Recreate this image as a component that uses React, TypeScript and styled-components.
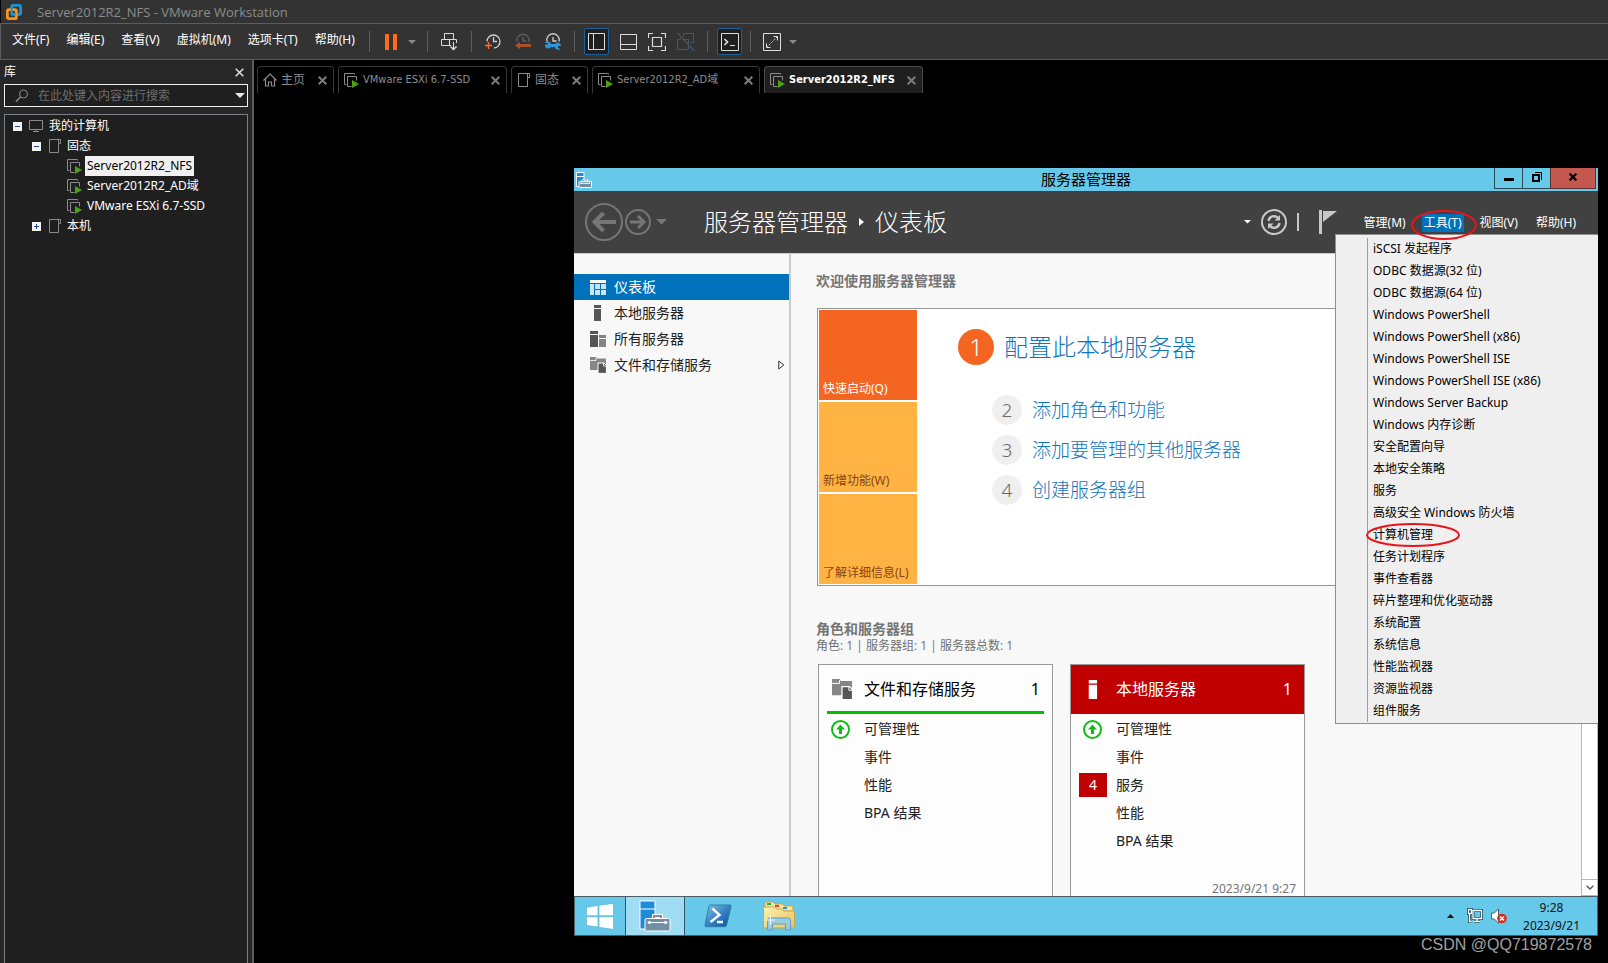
import React from 'react';
import styled, { createGlobalStyle, css } from 'styled-components';

const UI_FONT = '"Noto Sans", "Noto Sans CJK SC", sans-serif';
const TITLE_FONT = '"Open Sans", "Noto Sans CJK SC", sans-serif';
const TAB_FONT = '"DejaVu Sans Condensed", "Noto Sans CJK SC", sans-serif';

const GlobalStyle = createGlobalStyle`
  * { box-sizing: border-box; }
  body { margin: 0; background: #000; font-family: ${UI_FONT}; font-size: 12px; line-height: 20px; }
  button, input { font: inherit; color: inherit; margin: 0; padding: 0; border: 0; background: none; }
  a { color: inherit; text-decoration: none; }
  ul, h1, h2, h3, p { margin: 0; padding: 0; font-size: inherit; font-weight: inherit; list-style: none; }
  svg { display: block; flex: none; }
`;

/* ---------- host application ---------- */

const Page = styled.div`
  display: flex;
  flex-direction: column;
  height: 100vh;
  overflow: hidden;
  color: #fff;
`;

const TitleBar = styled.header`
  display: flex;
  align-items: center;
  gap: 15px;
  height: 23px;
  padding-left: 5px;
  background: #333;
  border-left: 1px solid #000;
  color: #8c8c8c;
  font-family: ${TITLE_FONT};
  font-size: 13px;
`;

const Toolbar = styled.nav`
  display: flex;
  align-items: center;
  height: 37px;
  padding-left: 11px;
  background: #333;
  border: solid #5c5c5c;
  border-width: 1px 0 1px 1px;
`;

const MenuBar = styled.div`
  display: flex;
  gap: 17px;
  width: 357px;
  padding-bottom: 3px;
  white-space: nowrap;
`;

const Divider = styled.span`
  width: 1px;
  height: 21px;
  background: #5c5c5c;
`;

const ToolGroup = styled.div<{ $gap: number; $pad: number; $end: number }>`
  display: flex;
  align-items: center;
  gap: ${p => p.$gap}px;
  padding: 0 ${p => p.$end}px 0 ${p => p.$pad}px;
`;

const ToolButton = styled.button<{ $active?: boolean }>`
  display: flex;
  align-items: center;
  justify-content: center;
  height: 27px;
  color: #dcdcdc;
  ${p => p.$active && css`
    width: 25px;
    background: #1f1f1f;
    border: 1px solid #1d6198;
    border-radius: 2px;
  `}
`;

const Body = styled.div`
  display: flex;
  flex: 1;
  min-height: 0;
`;

const Sidebar = styled.aside`
  display: flex;
  flex-direction: column;
  width: 254px;
  padding: 0 4px;
  background: #272727;
  border-right: 2px solid #5c5c5c;
`;

const SidebarHead = styled.div`
  display: flex;
  align-items: center;
  justify-content: space-between;
  height: 24px;
  padding-right: 4px;
`;

const SearchBox = styled.div`
  display: flex;
  align-items: center;
  gap: 9px;
  height: 23px;
  margin-bottom: 7px;
  padding: 0 2px 0 10px;
  background: #1f1f1f;
  border: 1px solid #f0f0f0;
`;

const SearchInput = styled.input`
  flex: 1;
  min-width: 0;
  outline: 0;
  &::placeholder { color: #6e6e6e; opacity: 1; }
`;

const Tree = styled.ul`
  flex: 1;
  padding-top: 1px;
  background: #1f1f1f;
  border: solid #7b7e84;
  border-width: 1px 1px 0;
`;

const TreeRow = styled.li<{ $indent: number }>`
  display: flex;
  align-items: center;
  gap: 7px;
  height: 20px;
  padding-left: ${p => p.$indent}px;
`;

const TreeLabel = styled.span<{ $selected?: boolean }>`
  margin-left: -4px;
  padding: 0 2px;
  ${p => p.$selected && css`background: #f0f0f0; color: #000;`}
`;

const Workspace = styled.main`
  display: flex;
  flex-direction: column;
  flex: 1;
  min-width: 0;
`;

const TabStrip = styled.div`
  display: flex;
  gap: 4px;
  height: 33px;
  padding: 6px 0 0 3px;
`;

const Tab = styled.div<{ $active?: boolean; $vm?: boolean; $width: number }>`
  display: flex;
  align-items: center;
  gap: 4px;
  width: ${p => p.$width}px;
  padding: 0 6px 0 5px;
  border: solid #363636;
  border-width: 1px 1px 0;
  border-radius: 4px 4px 0 0;
  font-family: ${TAB_FONT};
  font-size: ${p => (p.$vm ? 11 : 12)}px;
  white-space: nowrap;
  color: #8c8c8c;
  ${p => p.$active && css`
    background: #1f1f1f;
    border-color: #4a4a4a;
    color: #fff;
    font-weight: 700;
  `}
`;

const TabLink = styled.a`
  flex: 1;
`;

const GuestArea = styled.div`
  display: flex;
  flex: 1;
  min-height: 0;
  padding: 75px 10px 0 320px;
`;

const Watermark = styled.footer`
  height: 27px;
  padding-right: 16px;
  text-align: right;
  font: 16px/18px "Liberation Sans", sans-serif;
  color: #a0a0a0;
`;

/* ---------- guest desktop ---------- */

const Guest = styled.section`
  display: flex;
  flex-direction: column;
  flex: 1;
  min-width: 0;
  background: #f8f8f8;
  color: #222;
`;

const GuestTitle = styled.div`
  display: grid;
  grid-template-columns: 102px 1fr 104px;
  height: 23px;
  padding-left: 2px;
  background: #66c9ea;
  color: #000;
  font-size: 15px;
  line-height: 23px;
  text-align: center;
`;

const WindowButtons = styled.div`
  display: flex;
  justify-content: flex-end;
  height: 21px;
  padding-right: 2px;
`;

const WindowButton = styled.button<{ $close?: boolean }>`
  display: flex;
  align-items: center;
  justify-content: center;
  width: ${p => (p.$close ? 46 : 28)}px;
  padding-bottom: 2px;
  border: solid #2e4a55;
  border-width: 0 0 1px 1px;
  ${p => p.$close && css`background: #c4584f; border-color: #5c3030; border-right-width: 1px;`}
`;

const GuestHeader = styled.div`
  position: relative;
  display: flex;
  align-items: center;
  height: 63px;
  padding: 0 20px 0 11px;
  background: #414141;
  border-bottom: 1px solid #cdcdcd;
  color: #fff;
`;

const NavButtons = styled.div`
  display: flex;
  align-items: center;
  gap: 2px;
  width: 119px;
  color: #767676;
`;

const Breadcrumb = styled.h1`
  display: flex;
  align-items: center;
  gap: 11px;
  flex: 1;
  font-size: 24px;
  font-weight: 300;
  line-height: 32px;
`;

const HeaderTools = styled.div`
  display: flex;
  align-items: center;
  gap: 10px;
  margin-right: 25px;
`;

const HeaderMenu = styled.div`
  display: flex;
  align-items: center;
  gap: 14px;
  padding-top: 2px;
  white-space: nowrap;
`;

const HeaderMenuItem = styled.button<{ $open?: boolean }>`
  position: relative;
  padding: 0 2px;
  line-height: 18px;
  ${p => p.$open && css`background: #0072bc;`}
`;

const Mark = styled.svg`
  position: absolute;
  pointer-events: none;
  overflow: visible;
  fill: none;
  stroke: #e8141c;
  stroke-width: 2;
`;

const ToolsMark = styled(Mark)`
  left: -11px;
  top: -4px;
  z-index: 3;
`;

const ItemMark = styled(Mark)`
  left: -2px;
  top: -1px;
`;

const Dropdown = styled.div`
  position: absolute;
  z-index: 2;
  top: 43px;
  right: 0;
  width: 263px;
  padding: 3px 0 1px 31px;
  background: #efefef;
  border: solid #8f8f8f;
  border-width: 1px 0 1px 1px;
  color: #000;
`;

const DropdownList = styled.ul`
  border-left: 1px solid #9d9d9d;
`;

const DropdownItem = styled.li`
  position: relative;
  height: 22px;
  padding-left: 5px;
`;

const ItemButton = styled.button`
  line-height: 22px;
  white-space: nowrap;
`;

const GuestBody = styled.div`
  display: flex;
  flex: 1;
  min-height: 0;
  overflow: hidden;
`;

const NavPane = styled.nav`
  width: 217px;
  padding-top: 20px;
  border-right: 2px solid #c8c8c8;
  font-size: 14px;
`;

const NavItem = styled.a<{ $active?: boolean }>`
  display: flex;
  align-items: center;
  gap: 8px;
  height: 26px;
  padding: 0 4px 0 16px;
  ${p => p.$active && css`background: #0072bc; color: #fff;`}
`;

const NavText = styled.span`
  flex: 1;
`;

const Content = styled.div`
  flex: 1;
  min-width: 0;
  padding: 17px 0 0 25px;
`;

const Heading = styled.h2`
  font-size: 14px;
  font-weight: 600;
  color: #757575;
`;

const Welcome = styled.div`
  display: flex;
  margin: 17px 0 33px 1px;
  padding: 1px;
  background: #fff;
  border: 1px solid #969696;
`;

const Tiles = styled.div`
  display: grid;
  grid-template-rows: repeat(3, 90px);
  gap: 2px;
  width: 98px;
`;

const Tile = styled.button<{ $main?: boolean }>`
  display: flex;
  align-items: flex-end;
  padding: 0 4px 1px;
  white-space: nowrap;
  background: ${p => (p.$main ? '#f46522' : '#ffb343')};
  color: ${p => (p.$main ? '#fff' : '#8a4410')};
`;

const Steps = styled.div`
  display: flex;
  flex-direction: column;
  align-items: flex-start;
  gap: 10px;
  padding: 19px 0 0 41px;
  font-size: 19px;
  font-weight: 300;
`;

const Step = styled.a<{ $main?: boolean }>`
  display: flex;
  align-items: center;
  gap: 10px;
  margin-left: 34px;
  color: #0f75bd;
  ${p => p.$main && css`
    margin: 0 0 20px;
    font-size: 24px;
  `}
`;

const StepNumber = styled.span<{ $main?: boolean }>`
  width: ${p => (p.$main ? 36 : 30)}px;
  line-height: ${p => (p.$main ? 36 : 30)}px;
  border-radius: 50%;
  text-align: center;
  background: ${p => (p.$main ? '#f46522' : '#efefef')};
  color: ${p => (p.$main ? '#fff' : '#6a6a6a')};
`;

const Summary = styled.p`
  font-family: ${TITLE_FONT};
  line-height: 14px;
  color: #707070;
`;

const Cards = styled.div`
  display: flex;
  gap: 17px;
  padding: 11px 0 0 2px;
`;

const Card = styled.article`
  display: flex;
  flex-direction: column;
  width: 235px;
  height: 250px;
  background: #fdfdfd;
  border: 1px solid #999;
  font-size: 14px;
`;

const CardHead = styled.h3<{ $alert?: boolean }>`
  display: flex;
  align-items: center;
  height: 49px;
  margin: ${p => (p.$alert ? '0 0 1px' : '0 8px 1px')};
  padding: ${p => (p.$alert ? '0 12px 1px 12px' : '2px 4px 0 4px')};
  font-size: 16px;
  color: ${p => (p.$alert ? '#fff' : '#000')};
  ${p => (p.$alert ? css`background: #c00000;` : css`border-bottom: 3px solid #00c000;`)}
`;

const CardTitle = styled.span`
  flex: 1;
`;

const IconSlot = styled.span`
  display: flex;
  justify-content: center;
  width: 21px;
  margin-right: 12px;
`;

const CardRow = styled.div`
  display: grid;
  grid-template-columns: 28px 1fr;
  gap: 9px;
  align-items: center;
  justify-items: start;
  height: 28px;
  padding-left: 8px;
`;

const RowStatus = styled.span`
  display: flex;
  justify-content: center;
  width: 26px;
`;

const CountBadge = styled.span`
  width: 28px;
  line-height: 24px;
  text-align: center;
  background: #c00000;
  color: #fff;
`;

const CardDate = styled.time`
  padding: 27px 8px 0;
  text-align: right;
  font-size: 12px;
  line-height: 14px;
  color: #757575;
`;

const ScrollBar = styled.div`
  display: flex;
  flex-direction: column;
  justify-content: flex-end;
  width: 17px;
  background: #fff;
  border: solid #b8b8b8;
  border-width: 0 1px;
`;

const ScrollDown = styled.button`
  display: flex;
  align-items: center;
  justify-content: center;
  height: 17px;
  border: solid #b8b8b8;
  border-width: 1px 0;
`;

const Taskbar = styled.div`
  display: flex;
  align-items: stretch;
  height: 40px;
  background: #66c9ea;
  border: 1px solid #4c5f68;
  color: #111;
`;

const TaskButton = styled.button<{ $active?: boolean; $width: number }>`
  display: flex;
  align-items: center;
  justify-content: center;
  width: ${p => p.$width}px;
  ${p => p.$active && css`background: #a0ddf3; border: solid #2f5666; border-width: 0 1px;`}
`;

const Tray = styled.div`
  display: flex;
  align-items: center;
  gap: 8px;
  margin-left: auto;
  padding-right: 17px;
`;

const Clock = styled.time`
  margin-left: 8px;
  padding-top: 1px;
  line-height: 18px;
  text-align: center;
`;

/* ---------- icons ---------- */

const Caret = ({ w = 8, color = '#8a8a8a' }: { w?: number; color?: string }) => (
  <svg width={w} height={w / 2} viewBox="0 0 8 4"><path d="M0 0h8L4 4z" fill={color} /></svg>
);

const Cross = ({ color = '#7c7c7c', size = 9, thick = 2 }: { color?: string; size?: number; thick?: number }) => (
  <svg width={size} height={size} viewBox="0 0 9 9"><path d="M.7.7l7.6 7.6M8.3.7L.7 8.3" stroke={color} strokeWidth={thick} /></svg>
);

const VmwareLogo = () => (
  <svg width="16" height="16" viewBox="0 0 16 16" fill="none" strokeWidth="2.8">
    <rect x="5.700" y="1.400" width="8.900" height="8.900" rx="1.200" stroke="#1a92d4" />
    <rect x="1.400" y="5.700" width="8.900" height="8.900" rx="1.200" stroke="#f7931e" />
    <path d="M5.700 7V2.600M5.700 8.900v1.400h4" stroke="#1a92d4" strokeWidth="2" />
  </svg>
);

const VmIcon = () => (
  <svg width="15" height="15" viewBox="0 0 15 15" fill="none">
    <path d="M2.500 11.500h-2V.5h10v1" stroke="#8b8b8b" />
    <path d="M7.500 13.500h-4v-10h9v4" stroke="#8b8b8b" />
    <path d="M8 7l7 4-7 4z" fill="#4aa312" />
  </svg>
);

const FolderIcon = () => (
  <svg width="14" height="14" viewBox="-1 0 14 14" fill="none" stroke="#8b8b8b">
    <path d="M9.500 4.500v9h-9V.5h11v4h-2v-4" />
    <path d="M9.500 4.500v9" />
  </svg>
);

const ComputerIcon = () => (
  <svg width="15" height="12" viewBox="0 0 15 12" fill="none" stroke="#8b8b8b">
    <path d="M.5.5h13v9H.5zM4 11.500h6" /><path d="M7 9.500v2" />
  </svg>
);

const Expander = ({ open }: { open: boolean }) => (
  <svg width="9" height="9" viewBox="0 0 9 9">
    <rect width="9" height="9" fill="#f4f4f4" />
    <path d={open ? 'M2 4.500h5' : 'M2 4.500h5M4.500 2v5'} stroke="#2b4a9a" />
  </svg>
);

const HomeIcon = () => (
  <svg width="14" height="14" viewBox="0 0 14 14" fill="none" stroke="#8b8b8b" strokeWidth="1.200">
    <path d="M.5 7.500L7 1l6.500 6.500M2.500 6v7h3V9h3v4h3V6" />
  </svg>
);

const SearchIcon = () => (
  <svg width="14" height="14" viewBox="0 0 14 14" fill="none" stroke="#8b8b8b">
    <circle cx="8.500" cy="5" r="4" /><path d="M5.500 8L.8 12.800" strokeWidth="1.400" />
  </svg>
);

const PauseIcon = () => (
  <svg width="12" height="16" viewBox="0 0 12 16" fill="#ff6a1f"><path d="M0 0h4v16H0zM8 0h4v16H8z" /></svg>
);

const SendIcon = () => (
  <svg width="17" height="18" viewBox="0 0 17 18" fill="none" stroke="currentColor">
    <path d="M3.500 6V.5h9V6M.5 6.500h15V10M10 12.500H.5v-6M8.500 6.500v6M12.500 9v7" />
    <path d="M9.500 13.500l3 3 3-3" strokeWidth="1.500" />
  </svg>
);

const ClockBase = ({ children, dim }: { children: React.ReactNode; dim?: boolean }) => (
  <svg width="16" height="17" viewBox="0 0 16 17" fill="none">
    <g stroke={dim ? '#5e5e5e' : '#cfcfcf'} strokeWidth="1.300">{children}</g>
  </svg>
);

const SnapshotIcon = () => (
  <ClockBase>
    <path d="M2 8.500A6.500 6.500 0 1 1 9 15M8.500 4v4.500H12" />
    <path d="M0 12.500h7M3.500 9v7" stroke="#ff6a1f" strokeWidth="1.500" />
  </ClockBase>
);

const RevertIcon = () => (
  <ClockBase dim>
    <path d="M2 9A6.200 6.200 0 1 1 14 9M8 4v4h3.500" />
    <path d="M0 12.500L5 8.800v2.200h11v3H5v2.200z" fill="#a85127" stroke="none" />
  </ClockBase>
);

const ManageSnapshotIcon = () => (
  <ClockBase>
    <path d="M2 8.500A6.200 6.200 0 1 1 14 8.500M8 4v4h3.500" />
    <path d="M0 10h3v1.500H0a3.200 3.200 0 0 0 5.800 2.500H10a3.200 3.200 0 0 0 5.800 1.500H13V13h3a3.200 3.200 0 0 0-5.800-2H5.800A3.200 3.200 0 0 0 0 9.500z" fill="#2a97dc" stroke="none" />
  </ClockBase>
);

const LibraryIcon = () => (
  <svg width="17" height="17" viewBox="0 0 17 17" fill="none" stroke="currentColor"><path d="M.5.5h16v16H.5zM5.500.5v16" /></svg>
);

const ThumbIcon = () => (
  <svg width="17" height="16" viewBox="0 0 17 16" fill="none" stroke="currentColor"><path d="M.5.5h16v15H.5zM.5 10.500h16" /></svg>
);

const FitIcon = () => (
  <svg width="18" height="18" viewBox="0 0 18 18" fill="none" stroke="currentColor">
    <path d="M.5 5V.5H5M13 .5h4.500V5M17.500 13v4.500H13M5 17.500H.5V13M4.500 4.500h9v9h-9z" strokeWidth="1.200" />
  </svg>
);

const UnityIcon = () => (
  <svg width="18" height="18" viewBox="0 0 18 18" fill="none" stroke="#46586a">
    <path d="M6.500 4V.5h10v9H13M4 6.500H.5v10h11V13M6.500 6.500h5v5" /><path d="M.5 0L17.500 18" strokeWidth="1.200" />
  </svg>
);

const ConsoleIcon = () => (
  <svg width="18" height="18" viewBox="0 0 18 18" fill="none" stroke="currentColor">
    <path d="M.5.5h17v17H.5zM9 12.500h5" /><path d="M3.500 6l3 3-3 3" strokeWidth="1.700" />
  </svg>
);

const FullscreenIcon = () => (
  <svg width="18" height="18" viewBox="0 0 18 18" fill="none" stroke="currentColor">
    <path d="M.5.5h17v17H.5z" />
    <path d="M10.500 3.500h4v4M3.500 10.500v4h4" />
    <path d="M14 4L4 14" strokeDasharray="1.500 1" />
  </svg>
);

const ServerManagerIcon = ({ size }: { size: number }) => (
  <svg width={size} height={size} viewBox="0 0 32 32" stroke="#fff" strokeWidth={size < 20 ? 2 : 1}>
    <path d="M1 1h15v28H1z" fill="#1f8cdb" />
    <path d="M1 9h15" />
    <path d="M15 18.500v-2.500h7v2.500" fill="none" strokeWidth="4" />
    <path d="M15 18.500v-2.500h7v2.500" fill="none" stroke="#74929f" strokeWidth="2" />
    <rect x="6" y="18.500" width="25" height="12.500" rx="1.500" fill="#7190a5" />
    <path d="M8.500 22.500h20" />
    <path d="M10.500 21v3M26.500 21v3" strokeWidth="2" />
  </svg>
);

const BackIcon = () => (
  <svg width="38" height="38" viewBox="0 0 38 38" fill="none" stroke="currentColor">
    <circle cx="19" cy="19" r="18" strokeWidth="2" />
    <path d="M31 19H10M18.500 10l-9 9 9 9" strokeWidth="4" />
  </svg>
);

const ForwardIcon = () => (
  <svg width="26" height="26" viewBox="0 0 26 26" fill="none" stroke="currentColor">
    <circle cx="13" cy="13" r="12" strokeWidth="2" />
    <path d="M5 13h14M13 7l6 6-6 6" strokeWidth="3" />
  </svg>
);

const RefreshIcon = () => (
  <svg width="26" height="26" viewBox="0 0 26 26" fill="none" stroke="#c8c8c8">
    <circle cx="13" cy="13" r="12" strokeWidth="2" />
    <path d="M7.500 12a5.500 5.500 0 0 1 9.500-3M18.500 14a5.500 5.500 0 0 1-9.500 3" strokeWidth="2.400" />
    <path d="M19 6v5.500h-5.500zM7 20v-5.500h5.500z" fill="#c8c8c8" stroke="none" />
  </svg>
);

const FlagIcon = () => (
  <svg width="18" height="24" viewBox="0 0 18 24" fill="#c8c8c8"><path d="M0 0h3v24H0zM4 1h14L4 12z" /></svg>
);

const DashboardIcon = () => (
  <svg width="16" height="15" viewBox="0 0 16 15" fill="#fff">
    <path d="M0 0h16v3H0z" />
    <path d="M0 4h4v11H0zM5 4h5v5H5zM11 4h5v5h-5zM5 10h5v5H5zM11 10h5v5h-5z" opacity=".8" />
  </svg>
);

const LocalServerIcon = ({ color = '#555', h = 16 }: { color?: string; h?: number }) => (
  <svg width={h} height={h} viewBox="0 0 16 16" fill={color}><path d="M4 0h7v3H4zM4 4h7v12H4z" /></svg>
);

const AllServersIcon = () => (
  <svg width="16" height="16" viewBox="0 0 16 16">
    <path d="M0 0h8v3H0zM0 4h8v12H0z" fill="#555" /><path d="M9 4h7v3H9zM9 8h7v8H9z" fill="#858585" />
  </svg>
);

const StorageIcon = ({ size = 16 }: { size?: number }) => (
  <svg width={size} height={size} viewBox="0 0 16 16">
    <path d="M0 0h6l1 1.500h9V13H0z" fill="#868686" />
    <path d="M0 3.500h6V1" fill="none" stroke="#fff" strokeWidth=".8" />
    <path d="M8 6h6l2.400 2.400V16.400H8z" fill="#555" stroke="#fff" strokeWidth="1" />
    <path d="M13.500 6v3h3" fill="none" stroke="#fff" strokeWidth=".8" />
  </svg>
);

const UpIcon = () => (
  <svg width="19" height="19" viewBox="0 0 19 19">
    <circle cx="9.500" cy="9.500" r="8.500" fill="#fff" stroke="#0fbe14" strokeWidth="2" />
    <path d="M9.500 4.500l4.500 5h-3V14H8V9.500H5z" fill="#0fbe14" />
  </svg>
);

const WindowsLogo = () => (
  <svg width="28" height="27" viewBox="0 0 28 27" fill="#fff" stroke="#4faecb" strokeWidth=".6">
    <path d="M.5 4.300L12 2.500v10.200H.5zM13 2.300L27.500.4v12.300H13zM.5 13.800H12V24L.5 22.400zM13 13.800h14.500v12.700L13 24.300z" />
  </svg>
);

const PowerShellIcon = () => (
  <svg width="28" height="24" viewBox="0 0 28 24">
    <defs>
      <linearGradient id="ps" x1="0" y1="0" x2="1" y2="1">
        <stop offset="0" stopColor="#8cc4e4" /><stop offset=".5" stopColor="#3583c4" /><stop offset="1" stopColor="#0c4fa0" />
      </linearGradient>
    </defs>
    <path d="M6 1h20q1.500 0 1 1.500l-4.500 19q-.4 1.200-1.500 1.200H2q-1.500 0-1-1.500L5 2q.3-1 1-1z" fill="url(#ps)" stroke="#2f7ca8" />
    <path d="M8.500 4.500l7 6.500-9 7M13 18h6" fill="none" stroke="#fff" strokeWidth="2.400" />
  </svg>
);

const ExplorerIcon = () => (
  <svg width="32" height="30" viewBox="0 0 32 30">
    <defs>
      <linearGradient id="fold" x1="0" y1="0" x2="1" y2="1">
        <stop offset="0" stopColor="#fdf0b0" /><stop offset="1" stopColor="#e9c45e" />
      </linearGradient>
    </defs>
    <path d="M2 5V2q0-1 1-1h7l2 2h8l1 2h8q1 0 1 1v4H2z" fill="#f7e6a0" stroke="#c9a548" />
    <path d="M4 2h4v2H4z" fill="#1eb53a" /><path d="M12 4h4v2h-4z" fill="#d8442c" /><path d="M20 6h4v2h-4z" fill="#2c8fe0" />
    <path d="M.5 7q0-1 1-1h10l2 2h6l1 2h10q1 0 1 1v15q0 1-1 1h-29q-1 0-1-1z" fill="url(#fold)" stroke="#c9a548" />
    <path d="M4.500 29V19q0-2 2-2h19q2 0 2 2v10h-5v-6h-13v6z" fill="#8fcdec" fillOpacity=".9" stroke="#5b9fc6" />
    <path d="M7.500 14v10M3 19h9" stroke="#fff" strokeOpacity=".9" />
  </svg>
);

const NetworkIcon = () => (
  <svg width="16" height="16" viewBox="0 0 16 16" fill="none">
    <g stroke="#24505f" strokeWidth="3"><path d="M6 2.500h8.500v8H6zM7 13.500h6M10 11v2M2.500 6v7.500h2" /><rect x="1.500" y="1.500" width="3" height="4" /></g>
    <g stroke="#fff" strokeWidth="1.300"><path d="M6 2.500h8.500v8H6zM7 13.500h6M10 11v2M2.500 6v7.500h2" /><rect x="1.500" y="1.500" width="3" height="4" /></g>
  </svg>
);

const VolumeIcon = () => (
  <svg width="16" height="16" viewBox="0 0 16 16">
    <path d="M.6 5h2.800L7.500.8v14.400L3.400 11H.6z" fill="#fff" stroke="#4a6670" />
    <circle cx="11" cy="10.500" r="4.800" fill="#d92b20" />
    <path d="M9 8.500l4 4M13 8.500l-4 4" stroke="#fff" strokeWidth="1.600" />
  </svg>
);

/* ---------- data ---------- */

const hostMenus = ['文件(F)', '编辑(E)', '查看(V)', '虚拟机(M)', '选项卡(T)', '帮助(H)'];

const tabs = [
  { label: '主页', icon: <HomeIcon />, width: 77 },
  { label: 'VMware ESXi 6.7-SSD', icon: <VmIcon />, width: 169, vm: true },
  { label: '固态', icon: <FolderIcon />, width: 77 },
  { label: 'Server2012R2_AD域', icon: <VmIcon />, width: 168, vm: true },
  { label: 'Server2012R2_NFS', icon: <VmIcon />, width: 159, vm: true, active: true },
];

const tree = [
  { label: '我的计算机', indent: 8, icon: <ComputerIcon />, open: true },
  { label: '固态', indent: 27, icon: <FolderIcon />, open: true },
  { label: 'Server2012R2_NFS', indent: 62, icon: <VmIcon />, selected: true },
  { label: 'Server2012R2_AD域', indent: 62, icon: <VmIcon /> },
  { label: 'VMware ESXi 6.7-SSD', indent: 62, icon: <VmIcon /> },
  { label: '本机', indent: 27, icon: <FolderIcon />, open: false },
];

const toolItems = [
  'iSCSI 发起程序', 'ODBC 数据源(32 位)', 'ODBC 数据源(64 位)', 'Windows PowerShell',
  'Windows PowerShell (x86)', 'Windows PowerShell ISE', 'Windows PowerShell ISE (x86)',
  'Windows Server Backup', 'Windows 内存诊断', '安全配置向导', '本地安全策略', '服务',
  '高级安全 Windows 防火墙', '计算机管理', '任务计划程序', '事件查看器', '碎片整理和优化驱动器',
  '系统配置', '系统信息', '性能监视器', '资源监视器', '组件服务',
];

const navItems = [
  { label: '仪表板', icon: <DashboardIcon />, active: true },
  { label: '本地服务器', icon: <LocalServerIcon /> },
  { label: '所有服务器', icon: <AllServersIcon /> },
  { label: '文件和存储服务', icon: <StorageIcon />, more: true },
];

const steps = ['配置此本地服务器', '添加角色和功能', '添加要管理的其他服务器', '创建服务器组'];

/* ---------- page ---------- */

const HostToolbar = () => (
  <Toolbar>
    <MenuBar>{hostMenus.map(m => <button key={m}>{m}</button>)}</MenuBar>
    <Divider />
    <ToolGroup $gap={11} $pad={15} $end={11}>
      <ToolButton aria-label="挂起"><PauseIcon /></ToolButton>
      <ToolButton aria-label="电源选项"><Caret /></ToolButton>
    </ToolGroup>
    <Divider />
    <ToolGroup $gap={0} $pad={13} $end={13}><ToolButton aria-label="发送"><SendIcon /></ToolButton></ToolGroup>
    <Divider />
    <ToolGroup $gap={14} $pad={13} $end={13}>
      <ToolButton aria-label="快照"><SnapshotIcon /></ToolButton>
      <ToolButton aria-label="恢复快照"><RevertIcon /></ToolButton>
      <ToolButton aria-label="管理快照"><ManageSnapshotIcon /></ToolButton>
    </ToolGroup>
    <Divider />
    <ToolGroup $gap={11} $pad={9} $end={12}>
      <ToolButton $active aria-label="库"><LibraryIcon /></ToolButton>
      <ToolButton aria-label="缩略图"><ThumbIcon /></ToolButton>
      <ToolButton aria-label="全屏适应"><FitIcon /></ToolButton>
      <ToolButton aria-label="Unity"><UnityIcon /></ToolButton>
    </ToolGroup>
    <Divider />
    <ToolGroup $gap={0} $pad={9} $end={8}><ToolButton $active aria-label="控制台"><ConsoleIcon /></ToolButton></ToolGroup>
    <Divider />
    <ToolGroup $gap={8} $pad={12} $end={0}>
      <ToolButton aria-label="全屏"><FullscreenIcon /></ToolButton>
      <ToolButton aria-label="全屏选项"><Caret /></ToolButton>
    </ToolGroup>
  </Toolbar>
);

const Library = () => (
  <Sidebar>
    <SidebarHead>
      <h2>库</h2>
      <button aria-label="关闭库"><Cross color="#e8e8e8" thick={1.4} /></button>
    </SidebarHead>
    <SearchBox>
      <SearchIcon />
      <SearchInput aria-label="搜索" placeholder="在此处键入内容进行搜索" />
      <button aria-label="搜索选项"><Caret w={10} color="#e8e8e8" /></button>
    </SearchBox>
    <Tree>
      {tree.map(n => (
        <TreeRow key={n.label} $indent={n.indent}>
          {n.open !== undefined && <Expander open={n.open} />}
          {n.icon}
          <TreeLabel $selected={n.selected}>{n.label}</TreeLabel>
        </TreeRow>
      ))}
    </Tree>
  </Sidebar>
);

const ServerHeader = () => (
  <GuestHeader>
    <NavButtons>
      <button aria-label="后退"><BackIcon /></button>
      <button aria-label="前进"><ForwardIcon /></button>
      <ToolGroup $gap={0} $pad={3} $end={0}><Caret w={11} color="#767676" /></ToolGroup>
    </NavButtons>
    <Breadcrumb>
      服务器管理器
      <svg width="5" height="8" viewBox="0 0 5 8"><path d="M0 0l5 4-5 4z" fill="#fff" /></svg>
      仪表板
    </Breadcrumb>
    <HeaderTools>
      <Caret w={7} color="#fff" />
      <button aria-label="刷新"><RefreshIcon /></button>
      <svg width="3" height="18" viewBox="0 0 3 18"><path d="M0 0h2v18H0z" fill="#c8c8c8" /></svg>
      <ToolGroup $gap={0} $pad={9} $end={0}><FlagIcon /></ToolGroup>
    </HeaderTools>
    <HeaderMenu>
      <HeaderMenuItem>管理(M)</HeaderMenuItem>
      <HeaderMenuItem $open>
        工具(T)
        <ToolsMark width="66" height="30" viewBox="0 0 66 30"><ellipse cx="33" cy="15" rx="32" ry="14" /></ToolsMark>
      </HeaderMenuItem>
      <HeaderMenuItem>视图(V)</HeaderMenuItem>
      <HeaderMenuItem>帮助(H)</HeaderMenuItem>
    </HeaderMenu>
    <Dropdown>
      <DropdownList>
        {toolItems.map(t => (
          <DropdownItem key={t}>
            <ItemButton>{t}</ItemButton>
            {t === '计算机管理' && (
              <ItemMark width="94" height="24" viewBox="0 0 94 24"><ellipse cx="47" cy="12" rx="46" ry="11" /></ItemMark>
            )}
          </DropdownItem>
        ))}
      </DropdownList>
    </Dropdown>
  </GuestHeader>
);

const RoleCard = ({ title, icon, alert, rows, date }: {
  title: string; icon: React.ReactNode; alert?: boolean; rows: string[]; date?: string;
}) => (
  <Card>
    <CardHead $alert={alert}>
      <IconSlot>{icon}</IconSlot>
      <CardTitle>{title}</CardTitle>
      <span>1</span>
    </CardHead>
    {rows.map(r => (
      <CardRow key={r}>
        {r === '服务' ? <CountBadge>4</CountBadge> : <RowStatus>{r === '可管理性' && <UpIcon />}</RowStatus>}
        <a href="#row">{r}</a>
      </CardRow>
    ))}
    {date && <CardDate>{date}</CardDate>}
  </Card>
);

export default function App() {
  return (
    <Page>
      <GlobalStyle />
      <TitleBar><VmwareLogo />Server2012R2_NFS - VMware Workstation</TitleBar>
      <HostToolbar />
      <Body>
        <Library />
        <Workspace>
          <TabStrip>
            {tabs.map(t => (
              <Tab key={t.label} $active={t.active} $vm={t.vm} $width={t.width}>
                {t.icon}
                <TabLink href="#tab">{t.label}</TabLink>
                <button aria-label={`关闭 ${t.label}`}><Cross /></button>
              </Tab>
            ))}
          </TabStrip>
          <GuestArea>
            <Guest>
              <GuestTitle>
                <ToolGroup $gap={0} $pad={0} $end={0}><ServerManagerIcon size={16} /></ToolGroup>
                <span>服务器管理器</span>
                <WindowButtons>
                  <WindowButton aria-label="最小化"><svg width="10" height="8"><path d="M0 5h10v3H0z" /></svg></WindowButton>
                  <WindowButton aria-label="还原">
                    <svg width="10" height="10" viewBox="0 0 10 10" fill="none" stroke="#000"><path d="M1 3h6v6H1z" strokeWidth="2" /><path d="M3 .5h6.500V8" /></svg>
                  </WindowButton>
                  <WindowButton $close aria-label="关闭"><Cross color="#000" thick={2.4} size={8} /></WindowButton>
                </WindowButtons>
              </GuestTitle>
              <ServerHeader />
              <GuestBody>
                <NavPane>
                  {navItems.map(n => (
                    <NavItem key={n.label} href="#nav" $active={n.active}>
                      {n.icon}
                      <NavText>{n.label}</NavText>
                      {n.more && <svg width="7" height="10" viewBox="0 0 7 10"><path d="M.8 1l5 4-5 4z" fill="none" stroke="#333" /></svg>}
                    </NavItem>
                  ))}
                </NavPane>
                <Content>
                  <Heading>欢迎使用服务器管理器</Heading>
                  <Welcome>
                    <Tiles>
                      <Tile $main>快速启动(Q)</Tile>
                      <Tile>新增功能(W)</Tile>
                      <Tile>了解详细信息(L)</Tile>
                    </Tiles>
                    <Steps>
                      {steps.map((s, i) => (
                        <Step key={s} href="#step" $main={i === 0}>
                          <StepNumber $main={i === 0}>{i + 1}</StepNumber>
                          {s}
                        </Step>
                      ))}
                    </Steps>
                  </Welcome>
                  <Heading>角色和服务器组</Heading>
                  <Summary>角色: 1 | 服务器组: 1 | 服务器总数: 1</Summary>
                  <Cards>
                    <RoleCard title="文件和存储服务" icon={<StorageIcon size={20} />} rows={['可管理性', '事件', '性能', 'BPA 结果']} />
                    <RoleCard title="本地服务器" alert icon={<LocalServerIcon color="#fff" h={19} />} rows={['可管理性', '事件', '服务', '性能', 'BPA 结果']} date="2023/9/21 9:27" />
                  </Cards>
                </Content>
                <ScrollBar>
                  <ScrollDown aria-label="向下滚动">
                    <svg width="8" height="5" viewBox="0 0 8 5"><path d="M.7.700L4 4 7.300.7" fill="none" stroke="#555" strokeWidth="1.400" /></svg>
                  </ScrollDown>
                </ScrollBar>
              </GuestBody>
              <Taskbar>
                <TaskButton $width={50} aria-label="开始"><WindowsLogo /></TaskButton>
                <TaskButton $width={60} $active aria-label="服务器管理器"><ServerManagerIcon size={32} /></TaskButton>
                <TaskButton $width={66} aria-label="PowerShell"><PowerShellIcon /></TaskButton>
                <TaskButton $width={56} aria-label="文件资源管理器"><ExplorerIcon /></TaskButton>
                <Tray>
                  <svg width="7" height="4" viewBox="0 0 7 4"><path d="M0 4h7L3.500 0z" fill="#111" /></svg>
                  <ToolGroup $gap={8} $pad={5} $end={0}><NetworkIcon /><VolumeIcon /></ToolGroup>
                  <Clock>9:28<br />2023/9/21</Clock>
                </Tray>
              </Taskbar>
            </Guest>
          </GuestArea>
          <Watermark>CSDN @QQ719872578</Watermark>
        </Workspace>
      </Body>
    </Page>
  );
}
